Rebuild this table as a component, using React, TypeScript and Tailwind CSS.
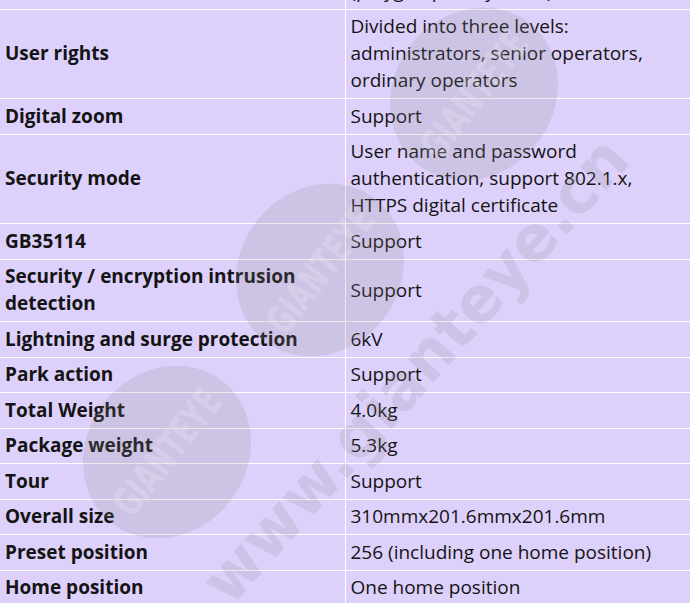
import React from "react";

// Spec table (partial) with watermark over it
type Row = { label: React.ReactNode; value: React.ReactNode };

const ROWS: Row[] = [
  {
    label: "User rights",
    value: (
      <>
        Divided into three levels:
        <br />
        administrators, senior operators,
        <br />
        ordinary operators
      </>
    ),
  },
  { label: "Digital zoom", value: "Support" },
  {
    label: "Security mode",
    value: (
      <>
        User name and password
        <br />
        authentication, support 802.1.x,
        <br />
        HTTPS digital certificate
      </>
    ),
  },
  { label: "GB35114", value: "Support" },
  {
    label: (
      <>
        Security / encryption intrusion
        <br />
        detection
      </>
    ),
    value: "Support",
  },
  { label: "Lightning and surge protection", value: "6kV" },
  { label: "Park action", value: "Support" },
  { label: "Total Weight", value: "4.0kg" },
  { label: "Package weight", value: "5.3kg" },
  { label: "Tour", value: "Support" },
  { label: "Overall size", value: "310mmx201.6mmx201.6mm" },
  { label: "Preset position", value: "256 (including one home position)" },
  { label: "Home position", value: "One home position" },
];

// watermark ovals, laid out diagonally
const OVALS = [
  { cx: 167, cy: 452 },
  { cx: 320, cy: 270 },
  { cx: 474, cy: 94 },
];

function Watermark() {
  return (
    <svg
      className="pointer-events-none absolute inset-0"
      width={690}
      height={603}
      viewBox="0 0 690 603"
    >
      {OVALS.map((o, i) => (
        <g key={i} transform={`rotate(-52 ${o.cx} ${o.cy})`}>
          <ellipse cx={o.cx} cy={o.cy} rx={90} ry={80} fill="#8a8a8a" fillOpacity={0.19} />
          <text
            x={o.cx}
            y={o.cy}
            textAnchor="middle"
            dominantBaseline="central"
            fontFamily="'DejaVu Sans Condensed', 'DejaVu Sans', sans-serif"
            fontWeight={700}
            fontSize={40}
            textLength={148}
            lengthAdjust="spacingAndGlyphs"
            fill="#ffffff"
            fillOpacity={0.2}
          >
            GIANTEYE
          </text>
        </g>
      ))}
      <text
        x={415}
        y={370}
        transform="rotate(-48 415 370)"
        textAnchor="middle"
        dominantBaseline="central"
        fontFamily="'DejaVu Sans', sans-serif"
        fontWeight={700}
        fontSize={64}
        textLength={600}
        lengthAdjust="spacingAndGlyphs"
        fill="#8a8a8a"
        fillOpacity={0.18}
      >
        www.gianteye.cn
      </text>
    </svg>
  );
}

export default function App() {
  return (
    <div className="relative h-[603px] w-[690px] overflow-hidden bg-[#ddd0fa] font-['Open_Sans',sans-serif] text-[19px] leading-[27px] text-[#141414]">
      <table className="-mt-[80px] w-[690px] table-fixed border-collapse">
        <colgroup>
          <col className="w-[345px]" />
          <col />
        </colgroup>
        <tbody>
          <tr className="border-b border-white">
            <td className="border-r border-white px-[5px] py-[3.75px] align-middle font-bold">
              Privacy mask
            </td>
            <td className="px-[5px] py-[3.75px] align-middle">
              Support
              <br />
              Up to 24 areas
              <br />
              (polygon privacy mask)
            </td>
          </tr>
          {ROWS.map((r, i) => (
            <tr key={i} className="border-b border-white">
              <td className="border-r border-white px-[5px] py-[3.75px] align-middle font-bold">
                {r.label}
              </td>
              <td className="px-[5px] py-[3.75px] align-middle">{r.value}</td>
            </tr>
          ))}
        </tbody>
      </table>
      <Watermark />
    </div>
  );
}
